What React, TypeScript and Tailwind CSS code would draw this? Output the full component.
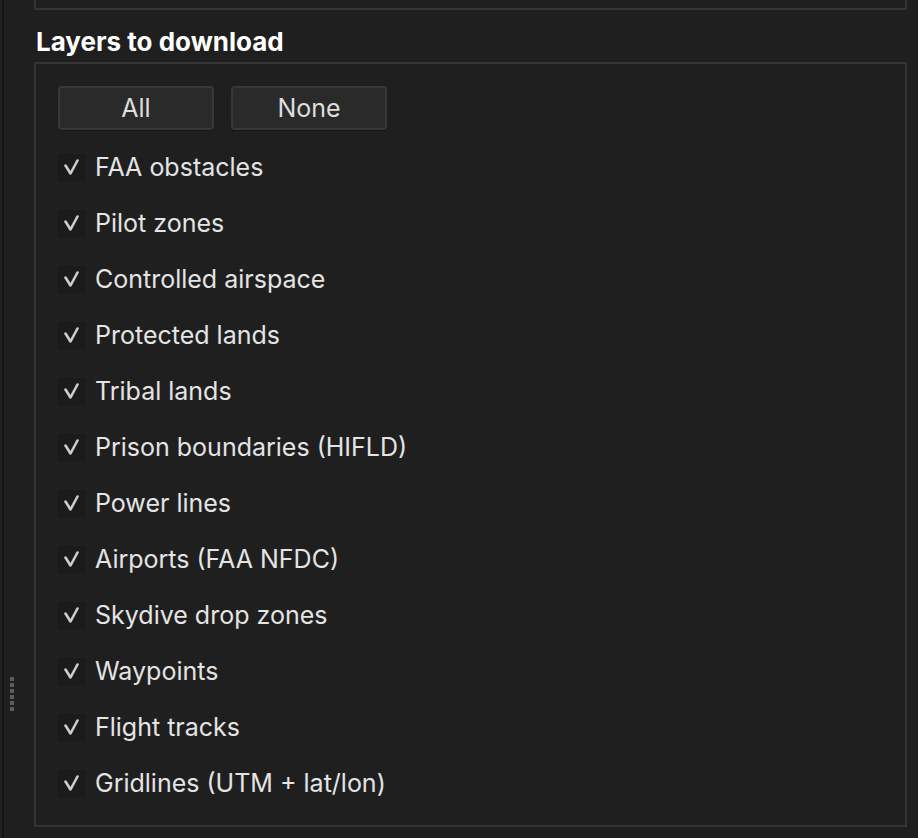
const LAYERS = [
  'FAA obstacles',
  'Pilot zones',
  'Controlled airspace',
  'Protected lands',
  'Tribal lands',
  'Prison boundaries (HIFLD)',
  'Power lines',
  'Airports (FAA NFDC)',
  'Skydive drop zones',
  'Waypoints',
  'Flight tracks',
  'Gridlines (UTM + lat/lon)',
];

function Check() {
  return (
    <span className="flex h-[27px] w-[27px] shrink-0 items-center justify-center rounded-[2px] border border-[#191919] bg-[#1b1b1b]">
      <svg width="16" height="16" viewBox="0 0 16 16" fill="none">
        <path
          d="M1.5 6.5 L6.5 14.5 L13.5 1.5"
          stroke="#cccccc"
          strokeWidth="2.6"
          strokeLinecap="round"
          strokeLinejoin="round"
        />
      </svg>
    </span>
  );
}

export default function App() {
  return (
    <div
      className="flex h-[838px] w-[918px] overflow-hidden bg-[#1f1f1f] text-[#e4e4e4]"
      style={{ fontFamily: 'Inter, "Noto Sans", sans-serif' }}
    >
      <div className="ml-[2px] w-[2px] shrink-0 bg-[#151515]" />
      <div className="flex w-[30px] shrink-0 flex-col pl-[6px] pt-[677px]">
        {[0, 1, 2, 3, 4, 5].map((i) => (
          <span key={i} className="mb-[2px] h-[4px] w-[4px] bg-[#5c5c5c]" />
        ))}
      </div>
      <div className="flex w-[873px] shrink-0 flex-col">
        <div className="h-[10px] border-x-2 border-b-2 border-[#333333]" />
        <h2 className="mt-[16px] pl-[2px] text-[26px] font-bold leading-[32px] text-white">
          Layers to download
        </h2>
        <div className="mt-[4px] flex h-[765px] flex-col border-2 border-[#333333] pl-[22px] pt-[22px]">
          <div className="flex gap-[17px]">
            <button
              type="button"
              className="flex h-[44px] w-[156px] items-center justify-center rounded-[4px] border-2 border-[#383838] bg-[#2a2a2a] pt-[2px] text-[25px] text-[#dedede] shadow-[0_1px_0_#151515]"
            >
              All
            </button>
            <button
              type="button"
              className="flex h-[44px] w-[156px] items-center justify-center rounded-[4px] border-2 border-[#383838] bg-[#2a2a2a] pt-[2px] text-[25px] text-[#dedede] shadow-[0_1px_0_#151515]"
            >
              None
            </button>
          </div>
          <div className="mt-[8px] flex flex-col">
            {LAYERS.map((name) => (
              <label key={name} className="flex h-[56px] items-center gap-[10px] pt-[2px]">
                <Check />
                <span className="pt-[1px] text-[25px] leading-none">{name}</span>
              </label>
            ))}
          </div>
        </div>
      </div>
    </div>
  );
}
